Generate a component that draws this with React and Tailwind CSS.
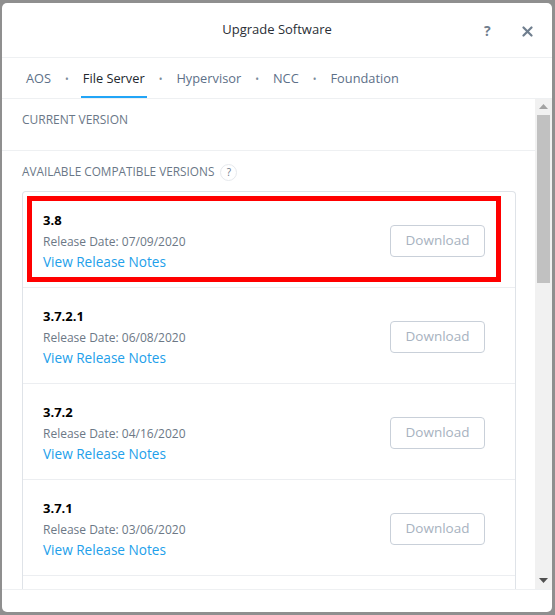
const versions = [
  { v: '3.8', date: '07/09/2020', marked: true },
  { v: '3.7.2.1', date: '06/08/2020' },
  { v: '3.7.2', date: '04/16/2020' },
  { v: '3.7.1', date: '03/06/2020' },
]

const tabs = ['AOS', 'File Server', 'Hypervisor', 'NCC', 'Foundation']

function VersionRow({ item }) {
  return (
    <div className="relative flex h-[96px] shrink-0 items-center justify-between border-b border-[#eceef1] pl-[20px] pr-[30px] pt-[2px]">
      <div className="flex flex-col">
        <div className="text-[13px] font-bold leading-[18px] text-black">{item.v}</div>
        <div className="mt-[5px] text-[12px] leading-[16px] text-[#6c7886]">Release Date: {item.date}</div>
        <a className="mt-[3px] text-[13.6px] leading-[18px] text-[#22a0ea]">View Release Notes</a>
      </div>
      <button className="h-[32px] w-[95px] rounded-[4px] border border-[#c9d0d9] bg-white text-[13.5px] text-[#a7b2c0]">
        Download
      </button>
      {item.marked && (
        <div className="pointer-events-none absolute left-[4px] right-[14px] top-[4px] bottom-[5px] border-[5px] border-[#ff0000]" />
      )}
    </div>
  )
}

export default function App() {
  return (
    <div className="h-[615px] w-[555px] bg-[#8f8f8f] pl-[2px] pt-[3px]" style={{ fontFamily: '"Open Sans", "Liberation Sans", sans-serif' }}>
      <div className="flex h-[609px] w-[550px] flex-col overflow-hidden rounded-[5px] bg-white">
        {/* header */}
        <div className="relative flex h-[55px] shrink-0 items-center justify-center border-b border-[#eef0f2]">
          <span className="text-[13px] text-[#2a2f36]">Upgrade Software</span>
          <span className="absolute left-[482px] top-[17px] text-[14px] font-bold text-[#6f7e8e]">?</span>
          <svg className="absolute left-[520px] top-[23px]" width="11" height="11" viewBox="0 0 11 11">
            <path d="M1.5 1.5 L9.5 9.5 M9.5 1.5 L1.5 9.5" stroke="#6f7e8e" strokeWidth="2.2" strokeLinecap="round" />
          </svg>
        </div>

        {/* tabs */}
        <div className="flex h-[41px] shrink-0 items-stretch border-b border-[#eef0f2] pl-[22px]">
          {tabs.map((t, i) => (
            <div key={t} className="flex items-stretch">
              {i > 0 && <span className="flex items-center px-[12px] pt-[3px] text-[10px] text-[#7b8a9a]">•</span>}
              <div className={`flex items-center border-b-2 px-[2px] pt-[4px] text-[12.8px] ${t === 'File Server' ? 'border-[#22a5f7] text-[#22272e]' : 'border-transparent text-[#5d7088]'}`}>
                {t}
              </div>
            </div>
          ))}
        </div>

        {/* scrolling body */}
        <div className="flex h-[490px] shrink-0 overflow-hidden">
          <div className="flex w-[533px] flex-col overflow-hidden">
            <div className="flex h-[52px] shrink-0 items-center border-b border-[#eef0f2] pl-[20px] pb-[10px]">
              <span className="text-[12px] text-[#6a7787]">CURRENT VERSION</span>
            </div>
            <div className="flex h-[40px] shrink-0 items-center pl-[20px] pt-[2px]">
              <span className="text-[11.8px] text-[#6a7787]">AVAILABLE COMPATIBLE VERSIONS</span>
              <span className="ml-[6px] flex h-[17px] w-[17px] items-center justify-center rounded-full border border-[#e6e9ed] text-[10px] text-[#6a7787]">?</span>
            </div>
            <div className="ml-[20px] flex w-[494px] flex-col rounded-t-[4px] border border-b-0 border-[#dfe3e8]">
              {versions.map((item) => (
                <VersionRow key={item.v} item={item} />
              ))}
              <div className="h-[96px] shrink-0" />
            </div>
          </div>
          {/* scrollbar */}
          <div className="flex w-[17px] flex-col items-center bg-[#f1f1f1]">
            <svg className="mt-[5px]" width="9" height="5" viewBox="0 0 9 5"><path d="M0 5 L4.5 0 L9 5 Z" fill="#a3a3a3" /></svg>
            <div className="mt-[6px] h-[168px] w-[13px] bg-[#c1c1c1]" />
            <div className="flex-1" />
            <svg className="mb-[6px]" width="9" height="5" viewBox="0 0 9 5"><path d="M0 0 L9 0 L4.5 5 Z" fill="#505050" /></svg>
          </div>
        </div>

        {/* footer */}
        <div className="flex-1 border-t border-[#eef0f2]" />
      </div>
    </div>
  )
}
